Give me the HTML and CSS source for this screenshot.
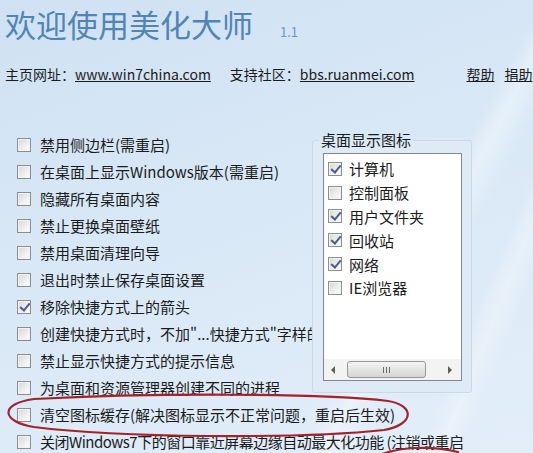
FILE: index.html
```html
<!DOCTYPE html>
<html lang="zh-CN">
<head>
  <meta charset="UTF-8">
  <meta name="viewport" content="width=device-width, initial-scale=1.0">
  <title>欢迎使用美化大师</title>
  <link rel="stylesheet" href="styles.css">
</head>
<body>
  <div class="window">
    <header class="head">
      <h1>欢迎使用美化大师</h1>
      <span class="ver">1.1</span>
    </header>

    <nav class="links">
      <span class="site">主页网址：<a href="#">www.win7china.com</a></span>
      <span class="bbs">支持社区：<a href="#">bbs.ruanmei.com</a></span>
      <a class="help" href="#">帮助</a>
      <a class="donate" href="#">捐助</a>
    </nav>

    <main class="panel">
      <!-- Desktop options -->
      <ul class="opts">
        <li><span class="box"></span>禁用侧边栏(需重启)</li>
        <li><span class="box"></span>在桌面上显示Windows版本(需重启)</li>
        <li><span class="box"></span>隐藏所有桌面内容</li>
        <li><span class="box"></span>禁止更换桌面壁纸</li>
        <li><span class="box"></span>禁用桌面清理向导</li>
        <li><span class="box"></span>退出时禁止保存桌面设置</li>
        <li><span class="box checked"></span>移除快捷方式上的箭头</li>
        <li><span class="box"></span>创建快捷方式时，不加"...快捷方式"字样的</li>
        <li><span class="box"></span>禁止显示快捷方式的提示信息</li>
        <li><span class="box"></span>为桌面和资源管理器创建不同的进程</li>
        <li><span class="box"></span>清空图标缓存(解决图标显示不正常问题，重启后生效)</li>
        <li class="tight"><span class="box"></span>关闭Windows7下的窗口靠近屏幕边缘自动最大化功能 (注销或重启</li>
      </ul>

      <!-- Desktop icons group -->
      <fieldset class="group">
        <legend>桌面显示图标</legend>
        <div class="listbox">
          <ul class="icons">
            <li><span class="box checked"></span>计算机</li>
            <li><span class="box"></span>控制面板</li>
            <li><span class="box checked"></span>用户文件夹</li>
            <li><span class="box checked"></span>回收站</li>
            <li><span class="box checked"></span>网络</li>
            <li><span class="box"></span>IE浏览器</li>
          </ul>
          <div class="hscroll">
            <span class="arrow left"></span>
            <span class="thumb"><span class="grip"></span></span>
            <span class="arrow right"></span>
          </div>
        </div>
      </fieldset>
    </main>

    <svg class="marks" width="533" height="453" viewBox="0 0 533 453">
      <path d="M34 399 C150 393 320 393 388 401 C414 405 416 424 384 430 C300 439 120 438 34 427 C2 422 -2 404 34 399 Z" />
      <path d="M377 456 C398 447 430 445 458 452" />
    </svg>
  </div>
</body>
</html>
```

FILE: styles.css
```css
/* General */
* {
  margin: 0;
  padding: 0;
  box-sizing: border-box;
}

body {
  width: 533px;
  height: 453px;
  overflow: hidden;
  font-family: "Noto Sans CJK SC", "Noto Sans", sans-serif;
  color: #1b1b1b;
  background:
    linear-gradient(118deg, transparent 70%, rgba(255, 255, 255, 0.35) 73%, transparent 77%),
    linear-gradient(112deg, transparent 84%, rgba(255, 255, 255, 0.3) 87%, transparent 90%),
    linear-gradient(160deg, #cfe1f3 0%, #d9e8f6 45%, #e3eef9 100%);
}

.window {
  position: relative;
  height: 100%;
  padding: 4px 0 0 5px;
}

/* Title */
.head {
  display: flex;
  align-items: baseline;
}

.head h1 {
  font-size: 31px;
  line-height: 40px;
  font-weight: normal;
  color: #5085b4;
}

.ver {
  margin-left: 27px;
  font-size: 13px;
  color: #6f98c0;
}

/* Links */
.links {
  display: flex;
  margin-top: 20px;
  height: 20px;
  font-size: 14px;
  line-height: 20px;
  white-space: nowrap;
}

.links a {
  color: #1b1b1b;
  text-decoration: underline;
}

.bbs {
  margin-left: 19px;
}

.help {
  margin-left: 52px;
}

.donate {
  margin-left: 10px;
}

/* Options */
.panel {
  position: relative;
  margin-top: 47px;
}

.opts {
  list-style: none;
  padding-left: 12px;
}

.opts li {
  display: flex;
  align-items: center;
  gap: 9px;
  height: 27px;
  font-size: 15px;
  white-space: nowrap;
}

.opts li.tight {
  letter-spacing: -0.5px;
}

.box {
  flex: none;
  position: relative;
  width: 14px;
  height: 14px;
  border: 1px solid #8d8e90;
  background: linear-gradient(135deg, #d6d6d6, #f4f4f4 70%, #fbfbfb);
  box-shadow: inset 0 0 0 1px #f2f2f2;
}

.box.checked::after {
  content: "";
  position: absolute;
  left: 4px;
  top: 0px;
  width: 4px;
  height: 8px;
  border: solid #4c5d8e;
  border-width: 0 2px 2px 0;
  transform: rotate(40deg);
}

/* Group box */
.group {
  position: absolute;
  left: 307px;
  top: -1px;
  width: 160px;
  height: 263px;
  padding: 0 9px 0 10px;
  border: 1px solid #cbd9e7;
  border-radius: 3px;
  background: #deeaf6;
}

.group legend {
  margin-left: -4px;
  padding: 0 2px;
  font-size: 15px;
  line-height: 20px;
}

.listbox {
  display: flex;
  flex-direction: column;
  margin-top: 3px;
  width: 139px;
  height: 228px;
  border: 1px solid #838790;
  background: #fff;
}

.icons {
  flex: 1;
  list-style: none;
  padding: 3px 0 0 4px;
}

.icons li {
  display: flex;
  align-items: center;
  gap: 7px;
  height: 23.8px;
  font-size: 15px;
  white-space: nowrap;
}

/* Horizontal scrollbar */
.hscroll {
  display: flex;
  align-items: center;
  height: 21px;
  background: #f3f3f3;
}

.arrow {
  width: 0;
  height: 0;
  border-top: 4px solid transparent;
  border-bottom: 4px solid transparent;
}

.arrow.left {
  margin-left: 7px;
  border-right: 4px solid #606060;
}

.arrow.right {
  margin-left: 22px;
  border-left: 4px solid #606060;
}

.thumb {
  display: flex;
  align-items: center;
  justify-content: center;
  margin-left: 12px;
  width: 79px;
  height: 17px;
  border: 1px solid #979797;
  border-radius: 3px;
  background: linear-gradient(#f5f5f5, #e4e4e4 50%, #d4d4d4);
}

.grip {
  width: 7px;
  height: 6px;
  background: repeating-linear-gradient(90deg, #6d6d6d 0 1px, transparent 1px 3px);
}

/* Red hand marks */
.marks {
  position: absolute;
  left: 0;
  top: 0;
  pointer-events: none;
}

.marks path {
  fill: none;
  stroke: #a3232b;
  stroke-width: 2.2;
  stroke-linecap: round;
}
```
